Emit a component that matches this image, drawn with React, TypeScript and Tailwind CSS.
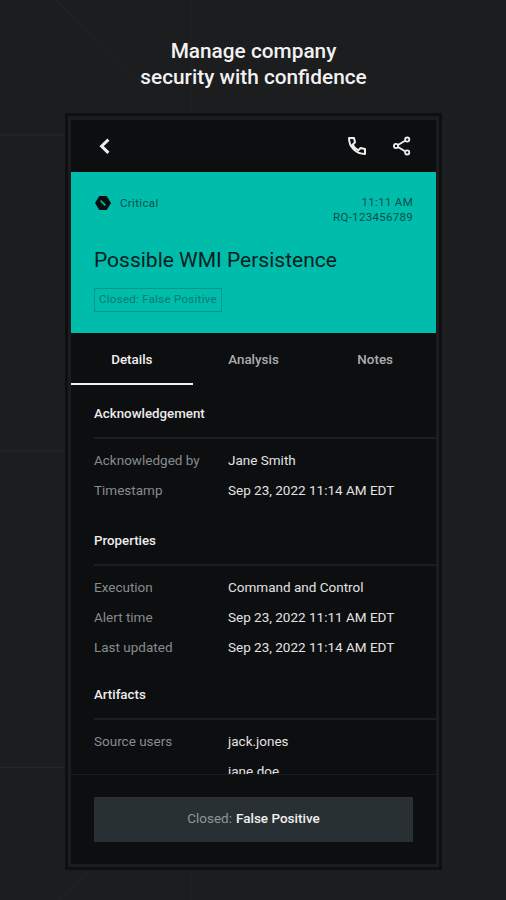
import { type ReactNode } from "react";
import clsx from "clsx";

type Row = { label: string; value: string };

const tabs = ["Details", "Analysis", "Notes"];

const acknowledgement: Row[] = [
  { label: "Acknowledged by", value: "Jane Smith" },
  { label: "Timestamp", value: "Sep 23, 2022 11:14 AM EDT" },
];

const properties: Row[] = [
  { label: "Execution", value: "Command and Control" },
  { label: "Alert time", value: "Sep 23, 2022 11:11 AM EDT" },
  { label: "Last updated", value: "Sep 23, 2022 11:14 AM EDT" },
];

const artifacts: Row[] = [
  { label: "Source users", value: "jack.jones" },
  { label: "", value: "jane.doe" },
];

// faint circuit lines behind the phone
const Backdrop = () => (
  <svg
    className="absolute inset-0 -z-10"
    width="506"
    height="900"
    fill="none"
    stroke="#222628"
    strokeWidth="1.5"
  >
    <path d="M0 135H66M0 451H66M0 767.5H66" />
    <path d="M56 0L170 110M191 0V113M58 900L90 870M191 870V900" strokeOpacity="0.6" />
  </svg>
);

const PhoneIcon = () => (
  <svg width="20" height="20" viewBox="0 0 20 20" fill="none" stroke="currentColor">
    <path
      d="M2 2H7L8 6.4L5.6 8.8C7 11.5 8.7 13.2 11.3 14.4L13.6 12L18 13V18C9 18 2 11 2 2Z"
      strokeWidth="2"
      strokeLinejoin="round"
    />
  </svg>
);

const ShareIcon = () => (
  <svg width="20" height="20" viewBox="0 0 20 20" fill="none" stroke="currentColor">
    <path d="M6 9L13 4.8M6 11L13 15.2" strokeWidth="1.9" />
    <g strokeWidth="1.8">
      <circle cx="15.2" cy="3.6" r="2.1" />
      <circle cx="4" cy="10" r="2.1" />
      <circle cx="15.2" cy="16.4" r="2.1" />
    </g>
  </svg>
);

const TopBar = () => (
  <div className="flex h-[52px] items-center justify-between pr-6 pl-[27px] text-[#eeeeee]">
    <svg width="13" height="18" viewBox="0 0 13 18" fill="none">
      <path d="M10.4 2.6L3.6 9.2L10.4 15.8" stroke="currentColor" strokeWidth="3" />
    </svg>
    <div className="flex items-center gap-[25px]">
      <PhoneIcon />
      <ShareIcon />
    </div>
  </div>
);

const AlertHeader = () => (
  <div className="flex h-[161px] flex-col items-start bg-[#00bcab] px-[23px]">
    <div className="mt-[22px] flex w-full justify-between text-[11.5px] leading-[15px] text-[#07504b]">
      <div className="flex h-[18px] items-center">
        <svg width="18" height="16" viewBox="0 0 18 16" className="mr-2">
          <path d="M5.3 1H12.7L17 8L12.7 15H5.3L1 8Z" fill="#07100f" />
          <path d="M6.6 5.6L11.4 10.4" stroke="#00bcab" strokeWidth="1.6" />
        </svg>
        <span className="tracking-[0.35px]">Critical</span>
      </div>
      <div className="pt-px text-right">
        <p className="tracking-[0.3px]">11:11 AM</p>
        <p className="tracking-[0.3px]">RQ-123456789</p>
      </div>
    </div>
    <h2 className="mt-[21px] text-[21px] leading-7 text-[#06201e]">
      Possible WMI Persistence
    </h2>
    <div className="mt-[14px] flex h-6 items-center border border-[#07968a] px-1 text-[11.5px] tracking-[0.28px] text-[#077a71]">
      Closed: False Positive
    </div>
  </div>
);

const Section = ({
  title,
  rows,
  className,
}: {
  title: string;
  rows: Row[];
  className?: string;
}) => (
  <section className={clsx("pl-[23px] text-[13.5px]", className)}>
    <h3 className="text-[13.3px] leading-5 font-medium text-[#ececec]">{title}</h3>
    <div className="mt-[13px] h-[2px] bg-[#1c1f21]" />
    <dl className="mt-1.5">
      {rows.map((row) => (
        <div key={row.value + row.label} className="flex h-[30px] items-center">
          <dt className="w-[134px] text-[#858c8e]">{row.label}</dt>
          <dd className="text-[#e2e2e2]">{row.value}</dd>
        </div>
      ))}
    </dl>
  </section>
);

const PhoneFrame = ({ children }: { children: ReactNode }) => (
  <div className="ml-[65px] h-[757px] w-[377px] border-[3px] border-[#0e0f11]">
    <div className="flex h-full flex-col border-[3px] border-t-4 border-[#1a1c1e] bg-[#0d0e10]">
      {children}
    </div>
  </div>
);

export default function App() {
  return (
    <div className="relative isolate h-[900px] w-[506px] overflow-hidden bg-[#1b1d1f] font-[Roboto,sans-serif]">
      <Backdrop />
      <h1 className="pt-[38px] pb-[23px] pl-[1px] text-center text-[20.8px] leading-[26px] font-medium text-[#f2f2f2]">
        Manage company
        <br />
        security with confidence
      </h1>
      <PhoneFrame>
        <TopBar />
        <AlertHeader />
        <div className="grid h-[52px] shrink-0 grid-cols-3 text-[13.4px] font-medium">
          {tabs.map((tab, i) => (
            <div
              key={tab}
              className={clsx(
                "flex items-center justify-center border-b-2 pt-1",
                i === 0
                  ? "border-[#f0f0f0] text-[#f0f0f0]"
                  : "border-transparent text-[#a9afb0]"
              )}
            >
              {tab}
            </div>
          ))}
        </div>
        <div className="min-h-0 flex-1 overflow-hidden">
          <Section title="Acknowledgement" rows={acknowledgement} className="pt-[19px]" />
          <Section title="Properties" rows={properties} className="pt-[26px]" />
          <Section title="Artifacts" rows={artifacts} className="pt-[23px]" />
        </div>
        <div className="h-[90px] shrink-0 border-t border-[#1a1d1f] px-[23px] pt-[22px]">
          <button className="flex h-[45px] w-full items-center justify-center bg-[#293033] pb-0.5 text-[13.5px] font-medium text-[#f0f0f0]">
            <span className="mr-1 font-normal text-[#8f9799]">Closed:</span>
            False Positive
          </button>
        </div>
      </PhoneFrame>
    </div>
  );
}
